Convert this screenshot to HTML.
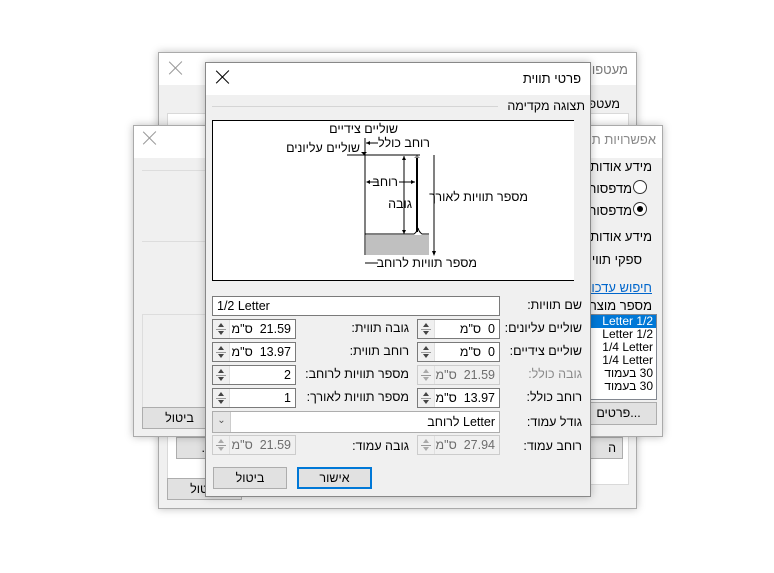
<!DOCTYPE html>
<html><head><meta charset="utf-8"><style>
*{margin:0;padding:0;box-sizing:border-box}
body{width:774px;height:573px;background:#fff;position:relative;overflow:hidden;font-family:"Liberation Sans","Noto Sans CJK JP",sans-serif;font-size:12.5px;color:#000}
.a{position:absolute}
.win{position:absolute;background:#f0f0f0;border:1px solid #aaa;box-shadow:0 0 8px rgba(0,0,0,.25)}
.tb{position:absolute;left:0;right:0;top:0;background:#fff}
.t{position:absolute;white-space:nowrap;direction:rtl}
.btn{position:absolute;background:#e1e1e1;border:1px solid #adadad;text-align:center;line-height:20px}
.in{position:absolute;background:#fff;border:1px solid #7a7a7a;height:20px}
.in.d{background:#f0f0f0;border-color:#ccc;color:#6d6d6d}
.sp{position:absolute;left:0;top:0;bottom:0;width:17px;background:#f0f0f0;border-right:1px solid #e0e0e0}
.sp:before{content:"";position:absolute;left:5px;top:3px;border:3px solid transparent;border-bottom:4px solid #444;border-top:0}
.sp:after{content:"";position:absolute;left:5px;bottom:3px;border:3px solid transparent;border-top:4px solid #444;border-bottom:0}
.sp i{position:absolute;left:3px;right:3px;top:9px;height:1px;background:#999}
.d .sp:before{border-bottom-color:#aaa}.d .sp:after{border-top-color:#aaa}
.v{position:absolute;right:4px;top:2px;direction:rtl;white-space:pre}
.x{position:absolute;width:14px;height:14px}
.x:before,.x:after{content:"";position:absolute;left:6px;top:-2px;width:1.3px;height:18px;background:#000;transform:rotate(45deg)}
.x:after{transform:rotate(-45deg)}
.x.g:before,.x.g:after{background:#999}
</style></head><body>

<!-- Window A -->
<div class="win" style="left:158px;top:52px;width:479px;height:457px">
 <div class="tb" style="height:32px"></div>
 <div class="x g" style="left:10px;top:8px"></div>
 <div class="t" style="right:8px;top:9px;color:#777;font-size:13px">מעטפות</div>
 <div class="t" style="right:16px;top:44px">מעטפות</div>
 <div class="a" style="left:8px;top:60px;width:462px;height:372px;background:#fff;border:1px solid #d9d9d9"></div>
 <div class="btn" style="left:17px;top:384px;width:70px;height:22px">...ם</div>
 <div class="btn" style="left:420px;top:384px;width:44px;height:22px;text-align:right;padding-right:6px">ה</div>
 <div class="btn" style="left:8px;top:425px;width:75px;height:22px">ביטול</div>
</div>

<!-- Window B -->
<div class="win" style="left:133px;top:125px;width:530px;height:312px">
 <div class="tb" style="height:32px"></div>
 <div class="x g" style="left:9px;top:5px"></div>
 <div class="t" style="right:6px;top:6px;color:#888;font-size:13px">אפשרויות תוויות</div>
 <div class="a" style="left:8px;top:44px;width:64px;height:1px;background:#ddd"></div>
 <div class="a" style="left:8px;top:115px;width:64px;height:1px;background:#ddd"></div>
 <div class="a" style="left:8px;top:188px;width:70px;height:95px;border:1px solid #ddd"></div>
 <div class="btn" style="left:8px;top:281px;width:75px;height:22px">ביטול</div>
 <div class="t" style="right:10px;top:33px;font-size:13px">מידע אודות המדפסת</div>
 <div class="t" style="right:30px;top:55px;font-size:13px">מדפסות רציפות</div>
 <div class="a" style="left:499px;top:54px;width:14px;height:14px;border:1px solid #333;border-radius:50%;background:#fff"></div>
 <div class="t" style="right:30px;top:77px;font-size:13px">מדפסות דף</div>
 <div class="a" style="left:499px;top:76px;width:14px;height:14px;border:1px solid #333;border-radius:50%;background:#fff"><div class="a" style="left:3px;top:3px;width:6px;height:6px;border-radius:50%;background:#000"></div></div>
 <div class="t" style="right:10px;top:103px;font-size:13px">מידע אודות התווית</div>
 <div class="t" style="right:20px;top:126px;font-size:13px">ספקי תוויות:</div>
 <div class="t" style="right:10px;top:154px;font-size:13px;color:#0066cc;text-decoration:underline">חיפוש עדכונים</div>
 <div class="t" style="right:10px;top:172px;font-size:13px">מספר מוצר:</div>
 <div class="a" style="left:456px;top:188px;width:67px;height:86px;background:#fff;border:1px solid #828790;font-size:12px;line-height:13px">
  <div style="background:#0078d7;color:#fff;text-align:right;padding-right:3px">Letter 1/2</div>
  <div style="text-align:right;padding-right:3px">Letter 1/2</div>
  <div style="text-align:right;padding-right:3px">1/4 Letter</div>
  <div style="text-align:right;padding-right:3px">1/4 Letter</div>
  <div style="text-align:right;padding-right:3px;direction:rtl">30 בעמוד</div>
  <div style="text-align:right;padding-right:3px;direction:rtl">30 בעמוד</div>
 </div>
 <div class="btn" style="left:446px;top:276px;width:77px;height:23px">פרטים...</div>
</div>

<!-- Front dialog -->
<div class="win" style="left:205px;top:62px;width:386px;height:435px;border-color:#888">
 <div class="tb" style="height:32px"></div>
 <div class="x" style="left:10px;top:7px"></div>
 <div class="t" style="right:9px;top:8px;font-size:13px">פרטי תווית</div>
 <div class="a" style="left:6px;top:43px;width:286px;height:1px;background:#d5d5d5"></div>
 <div class="t" style="right:5px;top:36px;font-size:12.5px">תצוגה מקדימה</div>
 <div class="a" style="left:6px;top:57px;width:362px;height:161px;background:#fff;border:1px solid #000;border-right:0"></div>
</div>

<svg class="a" style="left:0;top:0" width="774" height="573" font-family="Liberation Sans, Noto Sans CJK JP, sans-serif" font-size="12.5">
 <g stroke="#000" stroke-width="1" fill="none">
  <line x1="365" y1="138" x2="365" y2="255"/>
  <line x1="347" y1="155" x2="420" y2="155"/>
  <line x1="366" y1="143" x2="378" y2="143"/>
  <path d="M365 234 Q365 234 369 234 L414 234 Q417 232 418 228 Q419 232 422 234 L429 234"/>
  <line x1="417" y1="155" x2="417" y2="232" stroke-width="2"/>
  <line x1="404" y1="156" x2="404" y2="234"/>
  <line x1="367" y1="182" x2="378" y2="182"/>
  <line x1="399" y1="182" x2="415" y2="182"/>
  <line x1="434" y1="155" x2="434" y2="253"/>
  <line x1="365" y1="263" x2="378" y2="263"/>
 </g>
 <rect x="366" y="235" width="63" height="20" fill="#c0c0c0"/>
 <g fill="#000">
  <path d="M366 143 l4 -2 v4z"/><path d="M366 182 l4 -2 v4z"/><path d="M415 182 l-4 -2 v4z"/>
  <path d="M404 156 l-2 4 h4z"/><path d="M404 234 l-2 -4 h4z"/><path d="M434 256 l-2 -5 h4z"/>
  <path d="M364 155 l-3 -3 h6z" /><path d="M417 155 l-3 3 h6z" fill="#888"/>
 </g>
 <g direction="rtl" text-anchor="start">
  <text x="398" y="133">שוליים צידיים</text>
  <text x="430" y="147">רוחב כולל</text>
  <text x="360" y="152">שוליים עליונים</text>
  <text x="398" y="186">רוחב</text>
  <text x="412" y="208">גובה</text>
  <text x="528" y="201">מספר תוויות לאורך</text>
  <text x="477" y="267">מספר תוויות לרוחב</text>
 </g>
</svg>

<!-- fields -->
<div class="t" style="right:192px;top:298px">שם תוויות:</div>
<div class="in" style="left:212px;top:296px;width:288px"><div class="a" style="left:4px;top:2px">1/2 Letter</div></div>

<div class="t" style="right:192px;top:321px">שוליים עליונים:</div>
<div class="in" style="left:417px;top:319px;width:83px"><div class="sp"><i></i></div><div class="v">0  ס"מ</div></div>
<div class="t" style="right:365px;top:321px">גובה תווית:</div>
<div class="in" style="left:212px;top:319px;width:84px"><div class="sp"><i></i></div><div class="v">21.59  ס"מ</div></div>

<div class="t" style="right:192px;top:344px">שוליים צידיים:</div>
<div class="in" style="left:417px;top:342px;width:83px"><div class="sp"><i></i></div><div class="v">0  ס"מ</div></div>
<div class="t" style="right:365px;top:344px">רוחב תווית:</div>
<div class="in" style="left:212px;top:342px;width:84px"><div class="sp"><i></i></div><div class="v">13.97  ס"מ</div></div>

<div class="t" style="right:192px;top:367px;color:#8a8a8a">גובה כולל:</div>
<div class="in d" style="left:417px;top:365px;width:83px"><div class="sp"><i></i></div><div class="v">21.59  ס"מ</div></div>
<div class="t" style="right:365px;top:367px">מספר תוויות לרוחב:</div>
<div class="in" style="left:212px;top:365px;width:84px"><div class="sp"><i></i></div><div class="v">2</div></div>

<div class="t" style="right:192px;top:390px">רוחב כולל:</div>
<div class="in" style="left:417px;top:388px;width:83px"><div class="sp"><i></i></div><div class="v">13.97  ס"מ</div></div>
<div class="t" style="right:365px;top:390px">מספר תוויות לאורך:</div>
<div class="in" style="left:212px;top:388px;width:84px"><div class="sp"><i></i></div><div class="v">1</div></div>

<div class="t" style="right:192px;top:415px">גודל עמוד:</div>
<div class="in" style="left:212px;top:411px;width:288px;height:22px;border-color:#adadad"><div class="a" style="left:0;top:0;bottom:0;width:18px;background:#e5e5e5;border-right:1px solid #ccc;color:#555;text-align:center;line-height:18px;font-size:10px">&#8964;</div><div class="v" style="top:3px">Letter לרוחב</div></div>

<div class="t" style="right:192px;top:439px">רוחב עמוד:</div>
<div class="in d" style="left:417px;top:435px;width:83px"><div class="sp"><i></i></div><div class="v">27.94  ס"מ</div></div>
<div class="t" style="right:365px;top:439px">גובה עמוד:</div>
<div class="in d" style="left:212px;top:435px;width:84px"><div class="sp"><i></i></div><div class="v">21.59  ס"מ</div></div>

<div class="btn" style="left:213px;top:467px;width:74px;height:22px">ביטול</div>
<div class="btn" style="left:297px;top:467px;width:75px;height:22px;border:2px solid #0078d7;line-height:18px">אישור</div>
</body></html>
